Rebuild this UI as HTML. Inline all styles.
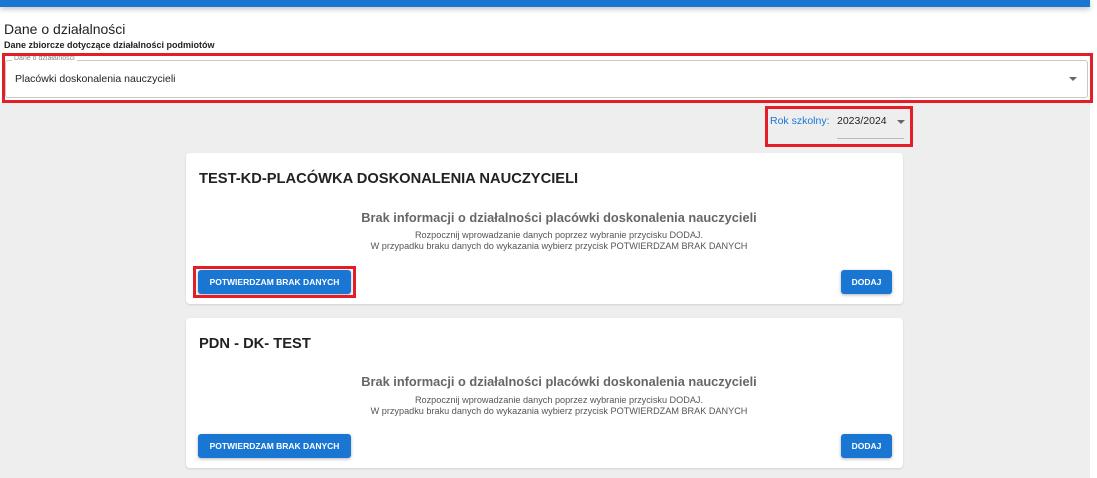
<!DOCTYPE html>
<html><head><meta charset="utf-8"><style>
*{box-sizing:border-box;margin:0;padding:0}
body{width:1097px;height:478px;overflow:hidden;background:#fff;font-family:"Liberation Sans",sans-serif;position:relative}
.page{position:absolute;left:0;top:0;width:1090px;height:478px;background:#eeeeee}
.top{position:absolute;left:0;top:0;width:1090px;height:102px;background:#fff}
.bar{position:absolute;left:0;top:0;width:1090px;height:7px;background:#1976d2;box-shadow:0 2px 6px rgba(0,0,0,.25)}
.a{position:absolute;white-space:nowrap}
.red{position:absolute;border:3px solid #e41e26}
.sel{position:absolute;left:5px;top:60px;width:1083px;height:38px;border:1px solid #c8c8c8;border-radius:3px;background:#fff}
.card{position:absolute;left:186px;width:717px;background:#fff;border-radius:4px;box-shadow:0 1px 2px rgba(0,0,0,.12)}
.btn{position:absolute;background:#1976d2;color:#fff;font-weight:bold;font-size:8.5px;border-radius:3px;box-shadow:0 1px 3px rgba(0,0,0,.3);text-align:center;line-height:24px;height:24px}
.tri{position:absolute;width:0;height:0;border-left:4px solid transparent;border-right:4px solid transparent;border-top:4px solid #666}
.h{font-size:14.7px;font-weight:bold;color:#222;left:13px;top:18px}
.m{font-size:12.8px;color:#666;font-weight:bold;left:0;width:746px;text-align:center}
.s{font-size:9.15px;color:#555;left:0;width:746px;text-align:center}
</style></head><body>
<div class="page"></div>
<div class="top"></div>
<div class="bar"></div>
<div class="a" style="left:4px;top:21px;font-size:14px;color:#222">Dane o działalności</div>
<div class="a" style="left:4px;top:40px;font-size:9px;font-weight:bold;color:#222">Dane zbiorcze dotyczące działalności podmiotów</div>
<div class="sel"></div>
<div class="a" style="left:12px;top:55px;font-size:7px;color:#888;background:#fff;padding:0 2px">Dane o działalności</div>
<div class="a" style="left:15px;top:73px;font-size:10.5px;color:#222">Placówki doskonalenia nauczycieli</div>
<div class="tri" style="left:1069px;top:77px"></div>
<div class="red" style="left:2px;top:53px;width:1091px;height:50px"></div>
<div class="a" style="left:770px;top:115px;font-size:10.5px;color:#1976d2">Rok szkolny:</div>
<div class="a" style="left:837px;top:115px;font-size:10.5px;color:#222">2023/2024</div>
<div class="tri" style="left:897px;top:120px"></div>
<div style="position:absolute;left:837px;top:138px;width:67px;height:1px;background:#bbb"></div>
<div class="red" style="left:765px;top:106px;width:148px;height:41px"></div>

<div class="card" style="top:153px;height:151px">
<div class="a h">TEST-KD-PLACÓWKA DOSKONALENIA NAUCZYCIELI</div>
<div class="a m" style="top:57px">Brak informacji o działalności placówki doskonalenia nauczycieli</div>
<div class="a s" style="top:77px">Rozpocznij wprowadzanie danych poprzez wybranie przycisku DODAJ.</div>
<div class="a s" style="top:88px">W przypadku braku danych do wykazania wybierz przycisk POTWIERDZAM BRAK DANYCH</div>
<div class="btn" style="left:12px;top:117px;width:153px">POTWIERDZAM BRAK DANYCH</div>
<div class="btn" style="left:655px;top:117px;width:51px">DODAJ</div>
</div>
<div class="red" style="left:193px;top:266px;width:163px;height:32px"></div>

<div class="card" style="top:318px;height:150px">
<div class="a h">PDN - DK- TEST</div>
<div class="a m" style="top:56px">Brak informacji o działalności placówki doskonalenia nauczycieli</div>
<div class="a s" style="top:77px">Rozpocznij wprowadzanie danych poprzez wybranie przycisku DODAJ.</div>
<div class="a s" style="top:88px">W przypadku braku danych do wykazania wybierz przycisk POTWIERDZAM BRAK DANYCH</div>
<div class="btn" style="left:12px;top:116px;width:153px">POTWIERDZAM BRAK DANYCH</div>
<div class="btn" style="left:655px;top:116px;width:51px">DODAJ</div>
</div>
</body></html>
